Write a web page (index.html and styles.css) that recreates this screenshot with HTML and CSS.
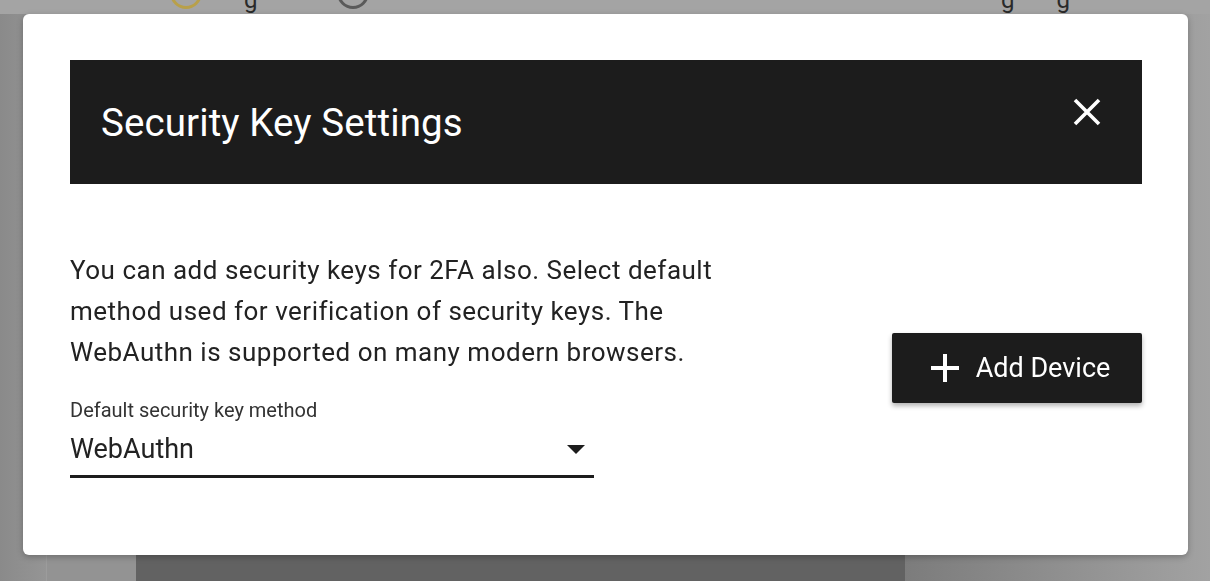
FILE: index.html
```html
<!DOCTYPE html>
<html lang="en">
<head>
<meta charset="utf-8">
<title>Security Key Settings</title>
<link rel="stylesheet" href="styles.css">
</head>
<body>
<div class="page">
  <div class="topbar">
    <span class="ring ring-yellow"></span>
    <span class="peek-text">g</span>
    <span class="ring ring-gray"></span>
    <span class="spacer"></span>
    <span class="peek-text">g</span>
    <span class="peek-text">g</span>
  </div>
  <div class="columns">
    <div class="col col-rail"></div>
    <div class="col col-nav"></div>
    <div class="col col-main"><div class="main-card"></div></div>
    <div class="col col-side"></div>
  </div>
</div>

<div class="modal" role="dialog" aria-labelledby="dlg-title">
  <header class="modal-header">
    <h1 id="dlg-title" class="modal-title">Security Key Settings</h1>
    <button class="close-btn" aria-label="Close">
      <svg width="28" height="28" viewBox="0 0 28 28"><path d="M2 2 L26 26 M26 2 L2 26" stroke="#fff" stroke-width="3.6" fill="none"/></svg>
    </button>
  </header>
  <div class="modal-body">
    <div class="left">
      <p class="desc">You can add security keys for 2FA also. Select default method used for verification of security keys. The WebAuthn is supported on many modern browsers.</p>
      <label class="field-label">Default security key method</label>
      <div class="select">
        <span class="select-value">WebAuthn</span>
        <span class="caret"></span>
      </div>
    </div>
    <button class="add-btn">
      <svg class="plus" width="28" height="28" viewBox="0 0 28 28"><rect x="12" y="0" width="4" height="28" fill="#fff"/><rect x="0" y="12" width="28" height="4" fill="#fff"/></svg>
      <span>Add Device</span>
    </button>
  </div>
</div>
</body>
</html>
```

FILE: styles.css
```css
* { box-sizing: border-box; }
html, body { margin: 0; padding: 0; }
body {
  width: 1210px;
  height: 581px;
  overflow: hidden;
  background: #a2a2a2;
  font-family: Roboto, "Liberation Sans", sans-serif;
}
.page {
  display: flex;
  flex-direction: column;
  height: 581px;
}
.topbar {
  height: 14px;
  display: flex;
  align-items: flex-end;
  overflow: hidden;
  background: #a4a4a4;
  padding-left: 170px;
  padding-right: 140px;
}
.ring {
  width: 32px;
  height: 32px;
  border-radius: 50%;
  margin-bottom: 5px;
  flex: none;
}
.ring-yellow { border: 3px solid #b8a04a; }
.ring-gray { border: 3px solid #5a5a5a; margin-left: 80px; }
.peek-text {
  font-size: 24px;
  line-height: 24px;
  color: #2a2a2a;
  margin-left: 42px;
  margin-bottom: 2px;
}
.spacer { flex: 1; }
.columns {
  flex: 1;
  display: flex;
}
.col { height: 100%; }
.col-rail { width: 46px; background: linear-gradient(90deg, #8a8a8a, #959595); }
.col-nav { width: 90px; background: #939393; border-left: 1px solid #9c9c9c; }
.col-main { width: 769px; background: #9e9e9e; display: flex; align-items: flex-end; }
.main-card { width: 100%; height: 60px; background: #626262; }
.col-side { flex: 1; background: linear-gradient(90deg, #7c7c7c, #a2a2a2); }

.modal {
  position: fixed;
  left: 23px;
  top: 14px;
  width: 1165px;
  height: 541px;
  background: #fff;
  border-radius: 6px;
  box-shadow: 0 2px 6px rgba(0,0,0,0.25);
  padding: 46px 46px 0 47px;
}
.modal-header {
  height: 124px;
  background: #1c1c1c;
  display: flex;
  align-items: center;
  justify-content: space-between;
  padding-left: 31px;
  padding-right: 41px;
}
.modal-title {
  margin: 0;
  color: #fff;
  font-weight: 400;
  font-size: 38.5px;
  letter-spacing: 0.1px;
}
.close-btn {
  width: 28px;
  height: 28px;
  border: 0;
  background: transparent;
  padding: 0;
  display: flex;
  align-items: center;
  justify-content: center;
  align-self: flex-start;
  margin-top: 38px;
}
.modal-body {
  margin-top: 66px;
  display: flex;
  align-items: center;
  justify-content: space-between;
}
.left { width: 680px; }
.desc {
  margin: 0;
  font-size: 26px;
  letter-spacing: 0.5px;
  line-height: 41px;
  color: #222;
}
.field-label {
  display: block;
  margin-top: 25px;
  font-size: 20px;
  line-height: 24px;
  color: #333;
}
.select {
  width: 524px;
  margin-top: 9px;
  display: flex;
  align-items: center;
  justify-content: space-between;
  border-bottom: 3px solid #1c1c1c;
  padding-bottom: 8px;
  padding-right: 9px;
}
.select-value {
  font-size: 27px;
  line-height: 36px;
  color: #222;
}
.caret {
  width: 0;
  height: 0;
  border-left: 9px solid transparent;
  border-right: 9px solid transparent;
  border-top: 9px solid #1c1c1c;
}
.add-btn {
  width: 250px;
  height: 70px;
  margin-top: 8px;
  background: #1c1c1c;
  border: 0;
  border-radius: 2px;
  box-shadow: 0 3px 5px rgba(0,0,0,0.3);
  color: #fff;
  display: flex;
  align-items: center;
  justify-content: center;
  gap: 17px;
  font-family: Roboto, "Liberation Sans", sans-serif;
  font-size: 27px;
  padding: 0 0 0 7px;
}
.plus { flex: none; }
```
